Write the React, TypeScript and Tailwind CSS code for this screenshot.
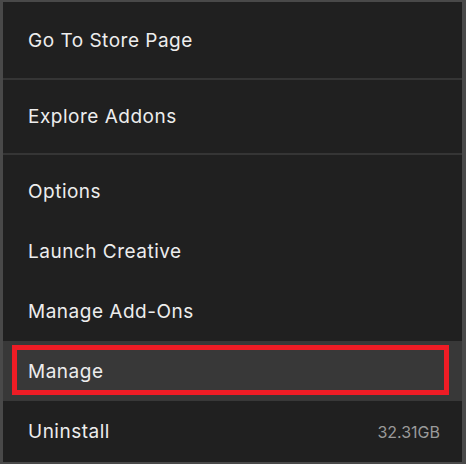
const rows = ["Options", "Launch Creative", "Manage Add-Ons"];

export default function App() {
  return (
    <div
      className="w-[466px] h-[464px] bg-[#202020] border-[#494949] border-l-[3px] border-r-4 border-t-2 border-b-2 flex flex-col text-[#ededed] text-[19px] tracking-[0.5px] overflow-hidden"
      style={{ fontFamily: "Inter, 'Noto Sans', sans-serif" }}
    >
      <div className="h-[76px] flex items-center pl-[25px] pt-[2px] shrink-0">Go To Store Page</div>
      <div className="h-[2px] bg-[#353535] shrink-0" />
      <div className="h-[73px] flex items-center pl-[25px] pt-[2px] shrink-0">Explore Addons</div>
      <div className="h-[2px] bg-[#353535] shrink-0" />
      <div className="h-[6px] shrink-0" />
      {rows.map((r) => (
        <div key={r} className="h-[60px] flex items-center pl-[25px] pt-[2px] shrink-0">
          {r}
        </div>
      ))}
      <div className="relative h-[60px] flex items-center pl-[25px] pt-[2px] bg-[#383838] shrink-0">
        Manage
        {/* highlight annotation */}
        <div className="absolute left-[9px] right-[13px] top-[4px] bottom-[6px] border-[5px] border-[#ee1c25]" />
      </div>
      <div className="h-[60px] flex items-center justify-between pl-[25px] pr-[22px] pt-[2px] shrink-0">
        <span>Uninstall</span>
        <span className="text-[16px] tracking-normal text-[#9a9a9a]">32.31GB</span>
      </div>
    </div>
  );
}
